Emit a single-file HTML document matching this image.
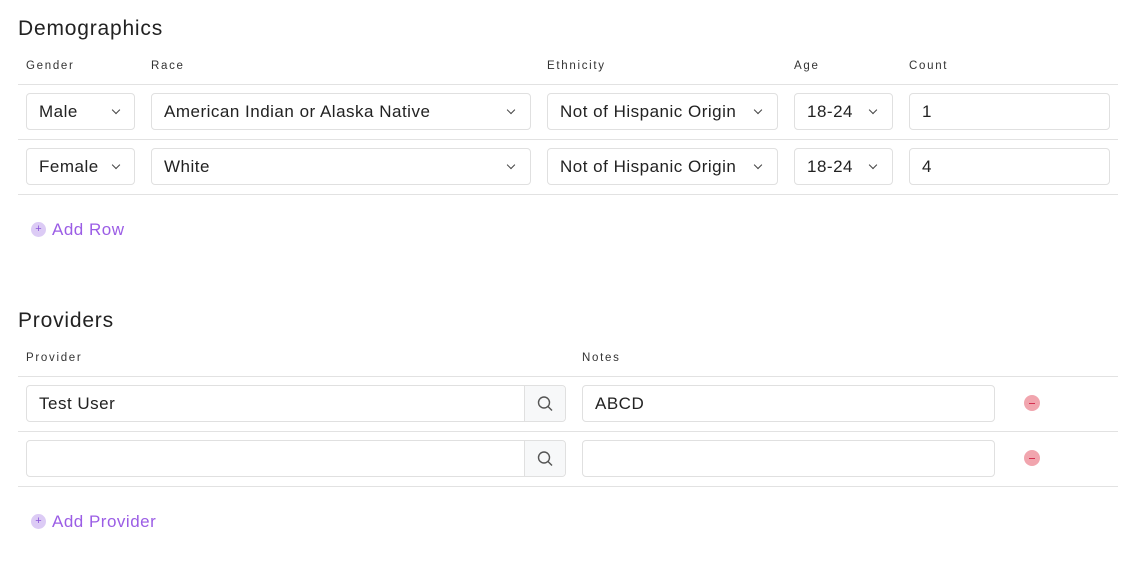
<!DOCTYPE html>
<html><head><style>
body{margin:0;width:1131px;height:565px;background:#fff;font-family:"Liberation Sans",sans-serif;color:#222;position:relative;overflow:hidden}
h2{position:absolute;margin:0;font-size:21px;letter-spacing:0.8px;font-weight:normal;color:#222;left:18px}
.lbl{position:absolute;font-size:11.5px;letter-spacing:1.7px;color:#333}
.hr{position:absolute;left:18px;width:1100px;height:1px;background:#e2e2e2}
.box{position:absolute;height:37px;border:1px solid #e0e0e0;border-radius:4px;box-sizing:border-box;font-size:17px;letter-spacing:0.5px;line-height:36px;padding-left:12px;color:#222;background:#fff}
.chev{position:absolute;top:13px;width:5px;height:5px;border-right:1.3px solid #444;border-bottom:1.3px solid #444;transform:rotate(45deg)}
.sb{position:absolute;right:0;top:0;width:40px;height:35px;border-left:1px solid #e0e0e0;background:#f7f8f9;border-radius:0 4px 4px 0}
.add{position:absolute;font-size:17px;letter-spacing:0.5px;color:#9b5de5;left:52px}
.pc{position:absolute;left:31px;width:15px;height:15px;border-radius:50%;background:#dccbf5;color:#8a55d8;font-size:11px;line-height:15px;text-align:center}
.mn{position:absolute;left:1024px;width:16px;height:16px;border-radius:50%;background:#f1a5ae}
.mn:after{content:"";position:absolute;left:5px;top:7.5px;width:6px;height:1.3px;background:#d43050}
</style></head><body>
<h2 style="top:17px">Demographics</h2>
<div class="lbl" style="left:26px;top:60px">Gender</div>
<div class="lbl" style="left:151px;top:60px">Race</div>
<div class="lbl" style="left:547px;top:60px">Ethnicity</div>
<div class="lbl" style="left:794px;top:60px">Age</div>
<div class="lbl" style="left:909px;top:60px">Count</div>
<div class="hr" style="top:84px"></div>
<div class="box" style="left:26px;top:93px;width:109px">Male<span class="chev" style="left:86px"></span></div>
<div class="box" style="left:151px;top:93px;width:380px">American Indian or Alaska Native<span class="chev" style="left:356px"></span></div>
<div class="box" style="left:547px;top:93px;width:231px">Not of Hispanic Origin<span class="chev" style="left:207px"></span></div>
<div class="box" style="left:794px;top:93px;width:99px">18-24<span class="chev" style="left:75px"></span></div>
<div class="box" style="left:909px;top:93px;width:201px">1</div>
<div class="hr" style="top:139px"></div>
<div class="box" style="left:26px;top:148px;width:109px">Female<span class="chev" style="left:86px"></span></div>
<div class="box" style="left:151px;top:148px;width:380px">White<span class="chev" style="left:356px"></span></div>
<div class="box" style="left:547px;top:148px;width:231px">Not of Hispanic Origin<span class="chev" style="left:207px"></span></div>
<div class="box" style="left:794px;top:148px;width:99px">18-24<span class="chev" style="left:75px"></span></div>
<div class="box" style="left:909px;top:148px;width:201px">4</div>
<div class="hr" style="top:194px"></div>
<div class="pc" style="top:222px">+</div><div class="add" style="top:220px">Add Row</div>

<h2 style="top:309px">Providers</h2>
<div class="lbl" style="left:26px;top:352px">Provider</div>
<div class="lbl" style="left:582px;top:352px">Notes</div>
<div class="hr" style="top:376px"></div>
<div class="box" style="left:26px;top:385px;width:540px">Test User<span class="sb"><svg width="40" height="35"><circle cx="19" cy="16.5" r="5.5" fill="none" stroke="#555" stroke-width="1.4"/><line x1="23" y1="20.5" x2="27" y2="24.5" stroke="#555" stroke-width="1.4"/></svg></span></div>
<div class="box" style="left:582px;top:385px;width:413px">ABCD</div>
<div class="mn" style="top:395px"></div>
<div class="hr" style="top:431px"></div>
<div class="box" style="left:26px;top:440px;width:540px"><span class="sb"><svg width="40" height="35"><circle cx="19" cy="16.5" r="5.5" fill="none" stroke="#555" stroke-width="1.4"/><line x1="23" y1="20.5" x2="27" y2="24.5" stroke="#555" stroke-width="1.4"/></svg></span></div>
<div class="box" style="left:582px;top:440px;width:413px"></div>
<div class="mn" style="top:450px"></div>
<div class="hr" style="top:486px"></div>
<div class="pc" style="top:514px">+</div><div class="add" style="top:512px">Add Provider</div>
</body></html>
